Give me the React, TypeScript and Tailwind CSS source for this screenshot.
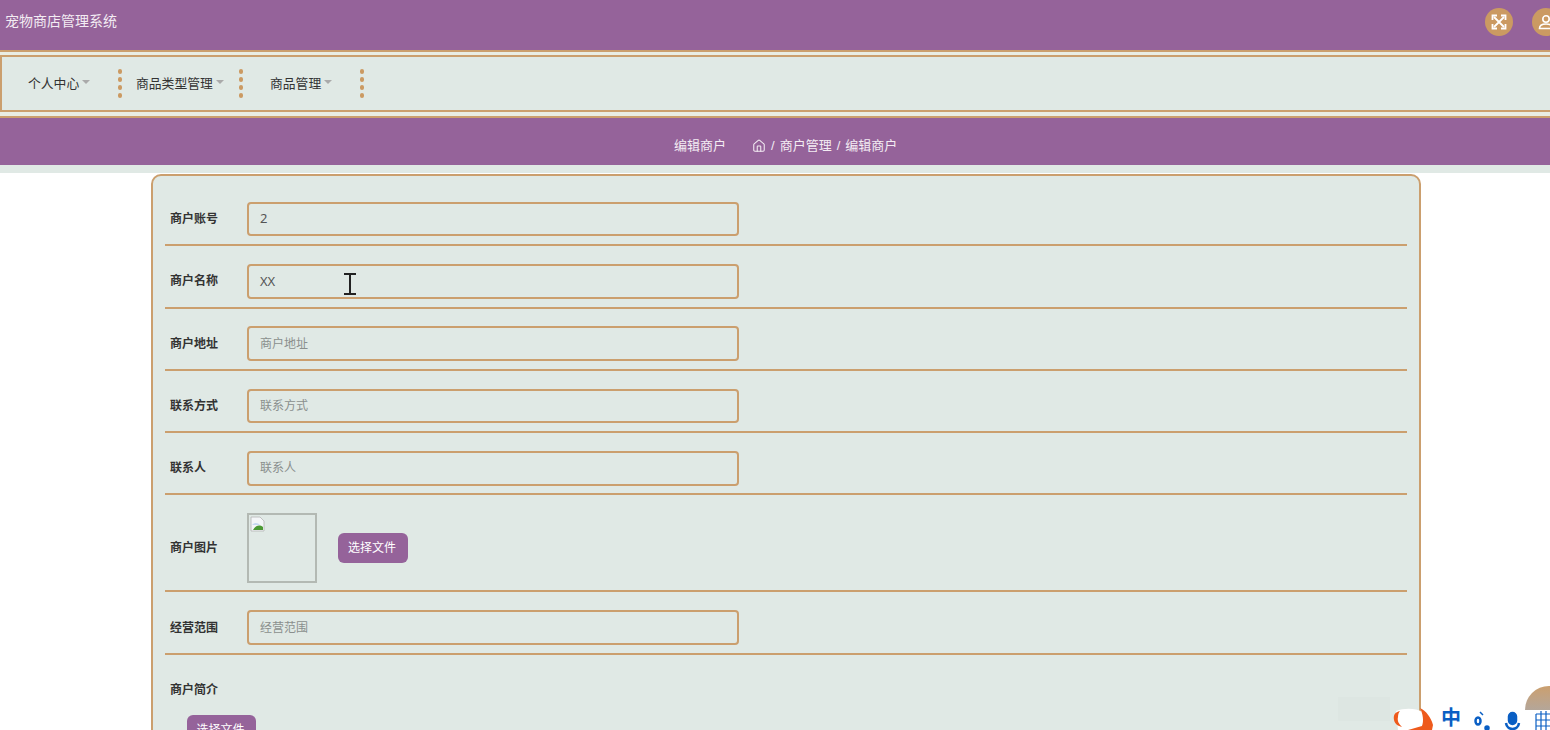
import { House } from 'lucide-react';

const font = "font-['Liberation_Sans','Noto_Sans_CJK_SC',sans-serif]";

function Dots() {
  return (
    <div className="flex flex-col gap-[3.5px]">
      <span className="w-[4.5px] h-[4.5px] rounded-full bg-[#cb9a62]" />
      <span className="w-[4.5px] h-[4.5px] rounded-full bg-[#cb9a62]" />
      <span className="w-[4.5px] h-[4.5px] rounded-full bg-[#cb9a62]" />
      <span className="w-[4.5px] h-[4.5px] rounded-full bg-[#cb9a62]" />
    </div>
  );
}

function NavItem({ label, className }: { label: string; className: string }) {
  return (
    <div className={`flex items-center ${className}`}>
      <span className="text-[12.8px] text-[#333]">{label}</span>
      <span className="ml-[3px] mt-[-3px] w-0 h-0 border-x-4 border-x-transparent border-t-4 border-t-[#aaa]" />
    </div>
  );
}

function Row({ label, placeholder, value }: { label: string; placeholder?: string; value?: string }) {
  return (
    <div className="flex items-center h-[62.3px] border-b-2 border-[#cb9f6e] pt-[10px]">
      <label className="w-[82px] pl-[5px] text-xs font-bold text-[#333]">{label}</label>
      <div className="w-[492px] h-[34.5px] flex items-center px-[11px] border-2 border-[#cb9f6e] rounded-[4px]">
        {value ? (
          <span className="text-[13px] text-[#555] font-['Noto_Sans',sans-serif]">{value}</span>
        ) : (
          <span className="text-xs text-[#8a8f8d]">{placeholder}</span>
        )}
      </div>
    </div>
  );
}

function TextCursor() {
  return (
    <svg className="absolute left-[343px] top-[273px]" width="14" height="22" viewBox="0 0 14 22" fill="none" stroke="#222" strokeWidth="2">
      <path d="M1 1h12M7 1v20M1 21h12" />
    </svg>
  );
}

function ExpandIcon() {
  return (
    <svg width="16" height="16" viewBox="0 0 16 16" fill="none" stroke="currentColor" strokeWidth="1.8">
      <path d="M3 3l10 10M13 3L3 13" />
      <path d="M1.500 6V1.500H6M10 1.500h4.500V6M14.500 10v4.500H10M6 14.500H1.500V10" />
    </svg>
  );
}

export default function App() {
  return (
    <div className={`relative h-[730px] overflow-hidden bg-white ${font}`}>
      <header className="h-[50px] bg-[#95639a] flex items-center justify-between pl-[5px] pb-[8px]">
        <span className="text-[14px] text-[#f3ecf3]">宠物商店管理系统</span>
        <div className="flex items-center gap-[19px] mr-[-10px] mt-[1px]">
          <div className="w-7 h-7 rounded-full bg-[#cb9a62] flex items-center justify-center text-white">
            <ExpandIcon />
          </div>
          <div className="w-7 h-7 rounded-full bg-[#cb9a62] flex items-center justify-center text-white">
            <svg width="16" height="16" viewBox="0 0 16 16" fill="none" stroke="currentColor" strokeWidth="1.6">
              <circle cx="8" cy="5" r="3.2" />
              <path d="M1.500 14.500c0-3 2.500-4.500 6.500-4.500s6.500 1.500 6.500 4.500z" />
            </svg>
          </div>
        </div>
      </header>

      <nav className="h-[68px] border-y-2 border-[#cb9f6e] bg-[#e9ede4] pt-[3px] pb-[4px]">
        <div className="h-full border-2 border-r-0 border-[#cb9f6e] bg-[#e0e9e5] flex items-center">
          <NavItem label="个人中心" className="ml-[26px] w-[89.5px]" />
          <Dots />
          <NavItem label="商品类型管理" className="ml-[14px] w-[102.5px]" />
          <Dots />
          <NavItem label="商品管理" className="ml-[27px] w-[89.5px]" />
          <Dots />
        </div>
      </nav>

      <div className="h-[47px] bg-[#95639a] flex items-center pl-[674px] pt-[8px] text-[13px] text-[#f3ecf3]">
        <span>编辑商户</span>
        <House className="ml-[26px] mr-[5px]" size={14} strokeWidth={1.8} />
        <div className="flex gap-[5px]">
          <span>/</span>
          <span>商户管理</span>
          <span>/</span>
          <span>编辑商户</span>
        </div>
      </div>
      <div className="h-[8px] bg-[#e0e9e5]" />

      <main className="mx-[151px] w-[1270px] mt-[1px] border-2 border-[#cb9f6e] rounded-[10px] bg-[#e0e9e5] px-[12px] pb-[20px]">
        <div className="h-[8px]" />
        <Row label="商户账号" value="2" />
        <Row label="商户名称" value="XX" />
        <Row label="商户地址" placeholder="商户地址" />
        <Row label="联系方式" placeholder="联系方式" />
        <Row label="联系人" placeholder="联系人" />
        <div className="flex items-center h-[97px] border-b-2 border-[#cb9f6e] pt-[11px]">
          <label className="w-[82px] pl-[5px] text-xs font-bold text-[#333]">商户图片</label>
          <div className="w-[70px] h-[70px] border-2 border-[#b3b9b3] p-[1px]">
            <svg width="16" height="16" viewBox="0 0 16 16">
              <path d="M1 1h9l4 4v10H1z" fill="#f4f6f8" stroke="#b5b5b5" strokeWidth="0.8" />
              <path d="M2 9c3-3 6-2 8 0H2z" fill="#c7d9f2" />
              <path d="M3 14c2-4 6-6 10-3v3z" fill="#4c9a35" />
            </svg>
          </div>
          <button className="ml-[21px] mt-[-1px] w-[70px] h-[29.5px] pr-[2px] rounded-[6px] bg-[#95639a] text-xs text-white">选择文件</button>
        </div>
        <Row label="经营范围" placeholder="经营范围" />
        <div className="h-[60px] pt-[10px] flex items-center pl-[5px] text-xs font-bold text-[#333]">商户简介</div>
        <button className="ml-[22px] w-[69px] h-[30px] pr-[2px] rounded-[6px] bg-[#95639a] text-xs text-white">选择文件</button>
      </main>

      <TextCursor />

      {/* floating IME toolbar over the page */}
      <div className="absolute left-[1338px] top-[697px] w-[52px] h-[24px] bg-[#dde6e2]" />
      <svg className="absolute left-[1390px] top-[705px]" width="50" height="25" viewBox="0 0 50 25">
        <path d="M6 6c8-3 20-3 26 1l4 18H8z" fill="#fff" />
        <path d="M10 6C5 7 3 10 4 15c1 4 4 6 8 7-3-3-5-6-4-10 0-3 1-5 2-6z" fill="#ee5a1c" />
        <path d="M30 3c6 3 11 9 13 17l-1 5H18c5-1 9-3 14-4 2-5 1-12-2-18z" fill="#ee5a1c" />
      </svg>
      <span className="absolute left-[1441px] top-[706px] text-[20px] leading-[24px] font-bold text-[#0a5fc4]">中</span>
      <svg className="absolute left-[1474px] top-[706px]" width="76" height="24" viewBox="0 0 76 24" fill="none" stroke="#0a5fc4" strokeWidth="2.5">
        <ellipse cx="4" cy="15" rx="2.500" ry="3.500" />
        <path d="M6 6l3 3" strokeWidth="1.500" />
        <circle cx="13" cy="22" r="1.500" fill="#0a5fc4" />
        <rect x="35" y="7" width="7" height="11" rx="3.500" fill="#0a5fc4" />
        <path d="M32 17c1 8 12 8 13 0" />
        <path d="M62 8h14M62 8v16M67 5v19M72 5v19M62 14h14M62 20h14" strokeWidth="1.200" />
      </svg>
      <div className="absolute left-[1525px] top-[686px] w-[50px] h-[24px] rounded-t-full bg-gradient-to-b from-[#cb9f6e] to-[#b4a699]" />
    </div>
  );
}
